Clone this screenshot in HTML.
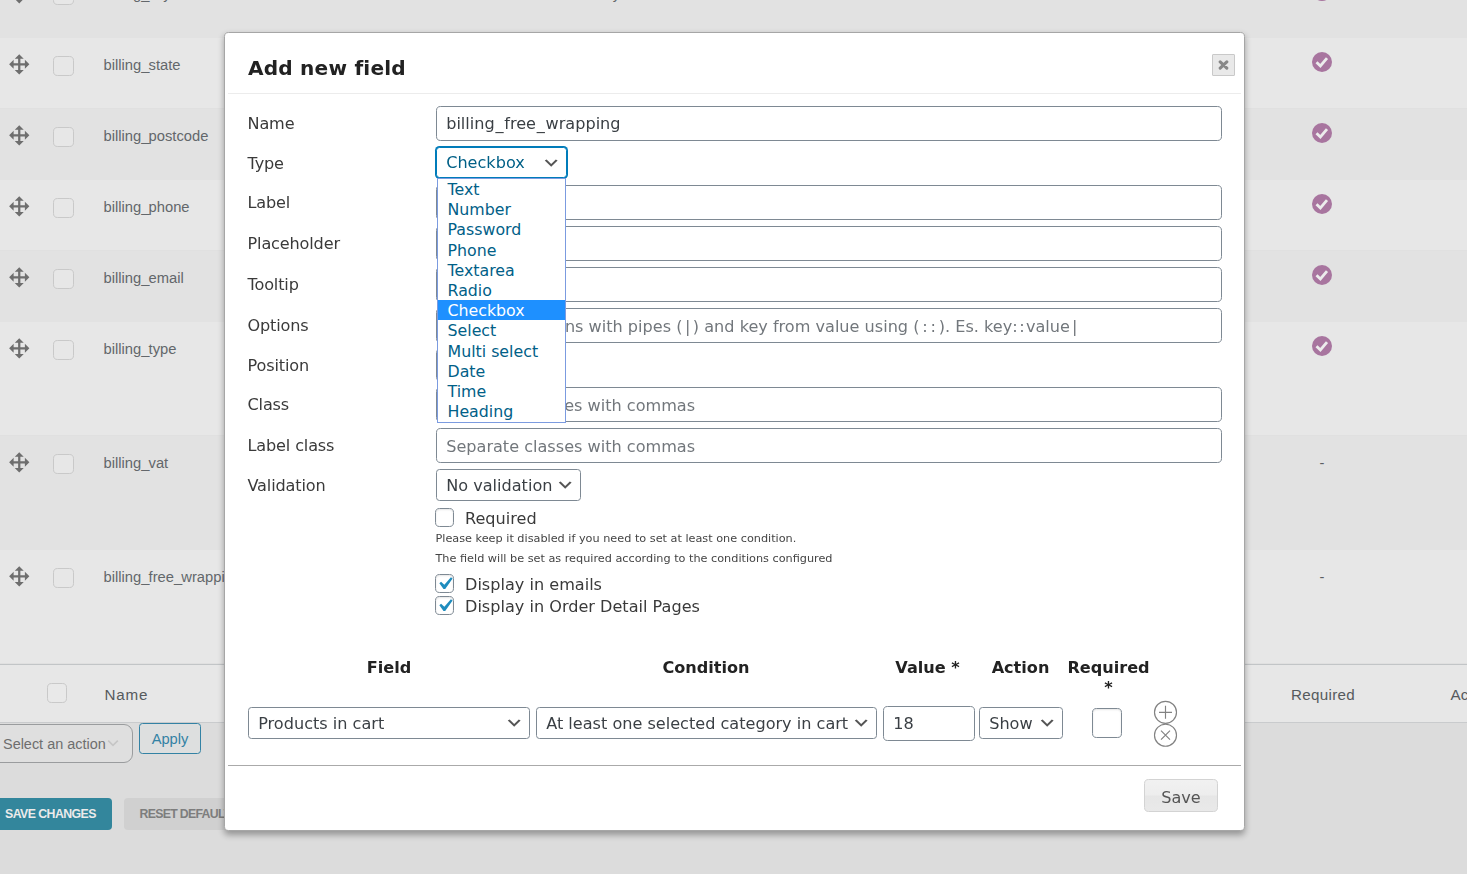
<!DOCTYPE html>
<html lang="en">
<head>
<meta charset="utf-8">
<title>Add new field</title>
<style>
*{box-sizing:border-box}
html,body{margin:0;padding:0}
body{width:1467px;height:874px;overflow:hidden;background:#dcdcdc;position:relative;font-family:"Liberation Sans",sans-serif;color:#565a5d}
.abs{position:absolute}
/* background table */
.row{position:absolute;left:0;width:1467px}
.lt{background:#e7e7e7;box-shadow:inset 0 -1px 0 #e0e0e0}.dk{background:#e2e2e2}
.row .mv{position:absolute;left:8.25px;width:22.5px;height:22.5px;margin-top:.25px}
.row .cb,.fcb{position:absolute;left:53px;width:21px;height:21px;border:1px solid #c9c9c9;border-radius:4.6px;background:#e7e7e7}
.row .nm{position:absolute;left:103.5px;font-size:14.75px;line-height:20px;color:#63676b;white-space:nowrap}
.row .ck{position:absolute;left:1312px;width:20px;height:20px}
.row .ds{position:absolute;left:1312px;width:20px;text-align:center;font-size:14.7px;line-height:20px;color:#5b5f63}
/* modal */
#dlg{position:absolute;left:224px;top:32px;width:1021px;height:799px;background:#fff;border:1px solid #a6a6a6;border-radius:4.6px;box-shadow:0 3.3px 6.5px rgba(0,0,0,.32);font-family:"DejaVu Sans","Liberation Sans",sans-serif;color:#3a3a3a;font-size:16.1px;will-change:transform}
#dlg .lbl{position:absolute;left:22.5px;line-height:20px;white-space:nowrap;letter-spacing:-.15px}
.inp{position:absolute;left:211px;width:786px;height:34.5px;border:1px solid #7e8993;border-radius:4.6px;background:#fff;padding:0 9.2px;line-height:34px;white-space:nowrap;overflow:hidden;color:#3a3f44}
.inp.ph{color:#72777c;line-height:36px}
.sel{position:absolute;height:32px;border:1px solid #7e8993;border-radius:3.45px;background:#fff;padding:0 0 0 9.2px;line-height:32px;white-space:nowrap;color:#3a3f44}
.sel svg{position:absolute;right:6px;top:6.2px;width:18.4px;height:18.4px}
.chk{position:absolute;width:19px;height:19px;border:1px solid #7e8993;border-radius:4.6px;background:#fff;box-shadow:inset 0 1px 2px rgba(0,0,0,.1)}
.sm{position:absolute;left:210.5px;font-size:11.25px;line-height:14px;white-space:nowrap;color:#444}
.op{position:absolute;left:0;width:127px;height:20.170px;line-height:20.170px;padding:.5px 0 0 9.500px;white-space:nowrap;font-size:15.800px;overflow:visible}.op.on{background:#1e90ff;color:#fff}
.th{position:absolute;font-weight:bold;text-align:center;line-height:20px;color:#222}
</style>
</head>
<body>
<!-- BACKGROUND -->
<div id="bg"><div class="row dk" style="top:-33px;height:71px"><svg class="mv" style="top:15px" viewBox="0 0 20 20"><path fill="#6e6e6e" d="M19 10l-4 4v-3h-4v4h3l-4 4-4-4h3v-4H5v3l-4-4 4-4v3h4V5H6l4-4 4 4h-3v4h4V6z"/></svg><span class="cb" style="top:18px;height:20px"></span><span class="nm" style="top:16.5px">billing<span style="letter-spacing:-.9px">_</span>city</span><span class="nm" style="top:16.5px;left:548px">Town / City</span><svg class="ck" style="top:14px" viewBox="0 0 20 20"><circle cx="10" cy="10" r="10" fill="#a8759f"/><path d="M4.500 10.200l3.900 3.800 6.600-7.900" fill="none" stroke="#ececec" stroke-width="2.800"/></svg></div>
<div class="row lt" style="top:38px;height:71px"><svg class="mv" style="top:15px" viewBox="0 0 20 20"><path fill="#6e6e6e" d="M19 10l-4 4v-3h-4v4h3l-4 4-4-4h3v-4H5v3l-4-4 4-4v3h4V5H6l4-4 4 4h-3v4h4V6z"/></svg><span class="cb" style="top:18px;height:20px"></span><span class="nm" style="top:16.5px">billing<span style="letter-spacing:-.9px">_</span>state</span><svg class="ck" style="top:14px" viewBox="0 0 20 20"><circle cx="10" cy="10" r="10" fill="#a8759f"/><path d="M4.500 10.200l3.900 3.800 6.600-7.900" fill="none" stroke="#ececec" stroke-width="2.800"/></svg></div>
<div class="row dk" style="top:109px;height:71px"><svg class="mv" style="top:15px" viewBox="0 0 20 20"><path fill="#6e6e6e" d="M19 10l-4 4v-3h-4v4h3l-4 4-4-4h3v-4H5v3l-4-4 4-4v3h4V5H6l4-4 4 4h-3v4h4V6z"/></svg><span class="cb" style="top:18px;height:20px"></span><span class="nm" style="top:16.5px">billing<span style="letter-spacing:-.9px">_</span>postcode</span><svg class="ck" style="top:14px" viewBox="0 0 20 20"><circle cx="10" cy="10" r="10" fill="#a8759f"/><path d="M4.500 10.200l3.900 3.800 6.600-7.900" fill="none" stroke="#ececec" stroke-width="2.800"/></svg></div>
<div class="row lt" style="top:180px;height:71px"><svg class="mv" style="top:15px" viewBox="0 0 20 20"><path fill="#6e6e6e" d="M19 10l-4 4v-3h-4v4h3l-4 4-4-4h3v-4H5v3l-4-4 4-4v3h4V5H6l4-4 4 4h-3v4h4V6z"/></svg><span class="cb" style="top:18px;height:20px"></span><span class="nm" style="top:16.5px">billing<span style="letter-spacing:-.9px">_</span>phone</span><svg class="ck" style="top:14px" viewBox="0 0 20 20"><circle cx="10" cy="10" r="10" fill="#a8759f"/><path d="M4.500 10.200l3.900 3.800 6.600-7.900" fill="none" stroke="#ececec" stroke-width="2.800"/></svg></div>
<div class="row dk" style="top:251px;height:71px"><svg class="mv" style="top:15px" viewBox="0 0 20 20"><path fill="#6e6e6e" d="M19 10l-4 4v-3h-4v4h3l-4 4-4-4h3v-4H5v3l-4-4 4-4v3h4V5H6l4-4 4 4h-3v4h4V6z"/></svg><span class="cb" style="top:18px;height:20px"></span><span class="nm" style="top:16.5px">billing<span style="letter-spacing:-.9px">_</span>email</span><svg class="ck" style="top:14px" viewBox="0 0 20 20"><circle cx="10" cy="10" r="10" fill="#a8759f"/><path d="M4.500 10.200l3.900 3.800 6.600-7.900" fill="none" stroke="#ececec" stroke-width="2.800"/></svg></div>
<div class="row lt" style="top:322px;height:114px"><svg class="mv" style="top:15px" viewBox="0 0 20 20"><path fill="#6e6e6e" d="M19 10l-4 4v-3h-4v4h3l-4 4-4-4h3v-4H5v3l-4-4 4-4v3h4V5H6l4-4 4 4h-3v4h4V6z"/></svg><span class="cb" style="top:18px;height:20px"></span><span class="nm" style="top:16.5px">billing<span style="letter-spacing:-.9px">_</span>type</span><svg class="ck" style="top:14px" viewBox="0 0 20 20"><circle cx="10" cy="10" r="10" fill="#a8759f"/><path d="M4.500 10.200l3.900 3.800 6.600-7.900" fill="none" stroke="#ececec" stroke-width="2.800"/></svg></div>
<div class="row dk" style="top:436px;height:114px"><svg class="mv" style="top:15px" viewBox="0 0 20 20"><path fill="#6e6e6e" d="M19 10l-4 4v-3h-4v4h3l-4 4-4-4h3v-4H5v3l-4-4 4-4v3h4V5H6l4-4 4 4h-3v4h4V6z"/></svg><span class="cb" style="top:18px;height:20px"></span><span class="nm" style="top:16.5px">billing<span style="letter-spacing:-.9px">_</span>vat</span><span class="ds" style="top:16.5px">-</span></div>
<div class="row lt" style="top:550px;height:114px"><svg class="mv" style="top:15px" viewBox="0 0 20 20"><path fill="#6e6e6e" d="M19 10l-4 4v-3h-4v4h3l-4 4-4-4h3v-4H5v3l-4-4 4-4v3h4V5H6l4-4 4 4h-3v4h4V6z"/></svg><span class="cb" style="top:18px;height:20px"></span><span class="nm" style="top:16.5px">billing<span style="letter-spacing:-.9px">_</span>free<span style="letter-spacing:-.9px">_</span>wrapping</span><span class="ds" style="top:16.5px">-</span></div>
<div class="row lt" style="top:664px;height:59px;box-shadow:none;border-top:1px solid #c2c5c7;border-bottom:1px solid #c9cbcd">
<span class="fcb" style="left:47px;top:18px;width:20px;height:20px;background:#e9e9e9"></span>
<span class="nm" style="left:104.5px;top:19.5px;font-size:15.200px;letter-spacing:.8px;color:#565a5d">Name</span>
<span class="nm" style="left:1291px;top:19.5px;font-size:15.200px;letter-spacing:.3px;color:#565a5d">Required</span>
<span class="nm" style="left:1450.5px;top:19.5px;font-size:15.200px;color:#565a5d">Actions</span>
</div>
<div class="abs" id="bulk" style="left:-40px;top:724px;width:172.500px;height:38.500px;border:1px solid #9a9c9e;border-radius:9px;background:#dfdfdf"></div>
<span class="abs" style="left:3px;top:733.500px;font-size:14.450px;line-height:20px;color:#6e6e6e;white-space:nowrap">Select an action</span>
<svg class="abs" style="left:105px;top:734.500px;width:16px;height:16px" viewBox="0 0 20 20"><path d="M4 7l6 6 6-6" fill="none" stroke="#c6c6c6" stroke-width="2"/></svg>
<div class="abs" id="apply" style="left:139px;top:723px;width:62px;height:31px;border:1px solid #3382a4;border-radius:3.45px;background:#dddfdf;color:#3382a4;font-size:14.7px;line-height:30px;text-align:center">Apply</div>
<div class="abs" id="savech" style="left:-6px;top:798px;width:118px;height:32px;border-radius:4px;background:#33869c;color:#ebebeb;font-weight:bold;font-size:12.300px;letter-spacing:-.55px;line-height:32px;white-space:nowrap;padding-left:11px">SAVE CHANGES</div>
<div class="abs" id="reset" style="left:124px;top:798px;width:140px;height:32px;border-radius:4px;background:#d0d0d0;color:#7d7d7d;font-weight:bold;font-size:12.300px;letter-spacing:-.7px;line-height:32px;white-space:nowrap;padding-left:15.500px">RESET DEFAULTS</div></div>
<!-- MODAL -->
<div id="dlg"><div class="abs" id="ttl" style="left:23px;top:22px;font-weight:bold;font-size:20.100px;letter-spacing:.2px;line-height:26px;color:#222;white-space:nowrap">Add new field</div>
<div class="abs" id="xbtn" style="left:987px;top:21px;width:23px;height:22px;border:1px solid #c9c9c9;border-radius:1px;background:#e9e9e9"><svg style="position:absolute;left:4.800px;top:5.400px;width:11px;height:10px" viewBox="0 0 11 10"><path d="M2.200 1.900l6.600 6.200M8.800 1.900l-6.600 6.200" stroke="#888" stroke-width="3.100" stroke-linecap="round"/></svg></div>
<div class="abs" style="left:3px;top:60px;width:1013px;height:1px;background:#ececec"></div>
<span class="lbl" style="top:80.5px">Name</span>
<div class="inp" style="top:73px;">billin<span style="letter-spacing:.75px">g_</span>fre<span style="letter-spacing:.75px">e_</span>wrapping</div>
<span class="lbl" style="top:120.5px">Type</span>
<span class="lbl" style="top:159.5px">Label</span>
<div class="inp" style="top:152px;"></div>
<span class="lbl" style="top:200.5px">Placeholder</span>
<div class="inp" style="top:193px;"></div>
<span class="lbl" style="top:241.5px">Tooltip</span>
<div class="inp" style="top:234px;"></div>
<span class="lbl" style="top:282.5px">Options</span>
<div class="inp ph" style="top:275px;">Separate options with pipes <span style="letter-spacing:2.500px">(|</span>) and key from value using <span style="letter-spacing:2.800px">(::</span>). Es. ke<span style="letter-spacing:1.350px">y::</span>value<span style="margin-left:2.200px">|</span></div>
<span class="lbl" style="top:322.5px">Position</span>
<div class="sel" style="left:211px;top:316px;width:110px">Full width<svg viewBox="0 0 20 20"><path d="M5 6l5 5 5-5 2 1-7 7-7-7 2-1z" fill="#555"/></svg></div>
<span class="lbl" style="top:361.5px">Class</span>
<div class="inp ph" style="top:354px;">Separate classes with commas</div>
<span class="lbl" style="top:402.5px">Label class</span>
<div class="inp ph" style="top:395px;">Separate classes with commas</div>
<span class="lbl" style="top:442.5px">Validation</span>
<div class="sel" style="left:211px;top:436px;width:145px">No validation<svg viewBox="0 0 20 20"><path d="M5 6l5 5 5-5 2 1-7 7-7-7 2-1z" fill="#555"/></svg></div>
<span class="chk" style="left:210px;top:474.5px"></span><span class="lbl" style="letter-spacing:0;left:240px;top:475.5px">Required</span>
<span class="sm" style="top:499px">Please keep it disabled if you need to set at least one condition.</span>
<span class="sm" style="top:518.6px">The field will be set as required according to the conditions configured</span>
<span class="chk" style="left:210px;top:540.5px"><svg style="position:absolute;left:-3.700px;top:-3.800px;width:25.500px;height:25.500px" viewBox="0 0 20 20"><path d="M14.83 4.89l1.340.94-5.810 8.380H9.020L5.780 9.670l1.340-1.250 2.570 2.400z" fill="#1e8cbe"/></svg></span><span class="lbl" style="letter-spacing:0;left:240px;top:541.5px">Display in emails</span>
<span class="chk" style="left:210px;top:562.5px"><svg style="position:absolute;left:-3.700px;top:-3.800px;width:25.500px;height:25.500px" viewBox="0 0 20 20"><path d="M14.83 4.89l1.340.94-5.810 8.380H9.020L5.780 9.670l1.340-1.250 2.570 2.400z" fill="#1e8cbe"/></svg></span><span class="lbl" style="letter-spacing:0;left:240px;top:563.5px">Display in Order Detail Pages</span>
<div class="sel" id="type" style="left:211px;top:114px;width:131px;height:31px;line-height:29px;border-color:#007cba;box-shadow:0 0 0 1px #007cba;color:#016087">Checkbox<svg viewBox="0 0 20 20"><path d="M5 6l5 5 5-5 2 1-7 7-7-7 2-1z" fill="#555"/></svg></div>
<div class="th" style="left:104.0px;width:120px;top:624.5px">Field</div>
<div class="th" style="left:421.0px;width:120px;top:624.5px">Condition</div>
<div class="th" style="left:642.5px;width:120px;top:624.5px">Value *</div>
<div class="th" style="left:735.5px;width:120px;top:624.5px">Action</div>
<div class="th" style="left:823.5px;width:120px;top:624.5px">Required<br>*</div>
<div class="sel" style="left:23px;top:674px;width:282px">Products in cart<svg viewBox="0 0 20 20"><path d="M5 6l5 5 5-5 2 1-7 7-7-7 2-1z" fill="#555"/></svg></div>
<div class="sel" style="left:311px;top:674px;width:341px">At least one selected category in cart<svg viewBox="0 0 20 20"><path d="M5 6l5 5 5-5 2 1-7 7-7-7 2-1z" fill="#555"/></svg></div>
<div class="inp" style="top:673px;left:658px;width:91.500px">18</div>
<div class="sel" style="left:754px;top:674px;width:84px">Show<svg viewBox="0 0 20 20"><path d="M5 6l5 5 5-5 2 1-7 7-7-7 2-1z" fill="#555"/></svg></div>
<span class="chk" style="left:867px;top:675px;width:29.500px;height:29.500px"></span>
<svg class="abs" style="left:928px;top:667px;width:25px;height:48px" viewBox="0 0 25 48"><g fill="none" stroke="#828282" stroke-width="1.150"><circle cx="12.500" cy="12.300" r="11"/><path d="M12.500 5.800v13M6 12.300h13"/><circle cx="12.500" cy="35.200" r="11"/><path d="M8 30.700l9 9M17 30.700l-9 9"/></g></svg>
<div class="abs" style="left:3px;top:732px;width:1013px;height:1px;background:#aaa"></div>
<div class="abs" id="save" style="left:919px;top:746px;width:74px;height:33px;border:1px solid #d3d3d3;border-radius:4.600px;background:linear-gradient(#f1f1f1 0,#ededed 49%,#e6e6e6 51%,#e9e9e9 100%);color:#555;text-align:center;line-height:36px">Save</div></div>
<div id="pop" style="position:absolute;left:437px;top:178px;font-family:&quot;DejaVu Sans&quot;,&quot;Liberation Sans&quot;,sans-serif;font-size:15.800px;width:129px;height:244.500px;border:1px solid #7b9be0;background:#fff;color:#016087"><div class="op" style="top:0px">Text</div><div class="op" style="top:20px">Number</div><div class="op" style="top:40px">Password</div><div class="op" style="top:61px">Phone</div><div class="op" style="top:81px">Textarea</div><div class="op" style="top:101px">Radio</div><div class="op on" style="top:121px">Checkbox</div><div class="op" style="top:141px">Select</div><div class="op" style="top:162px">Multi select</div><div class="op" style="top:182px">Date</div><div class="op" style="top:202px">Time</div><div class="op" style="top:222px">Heading</div></div>
</body>
</html>
